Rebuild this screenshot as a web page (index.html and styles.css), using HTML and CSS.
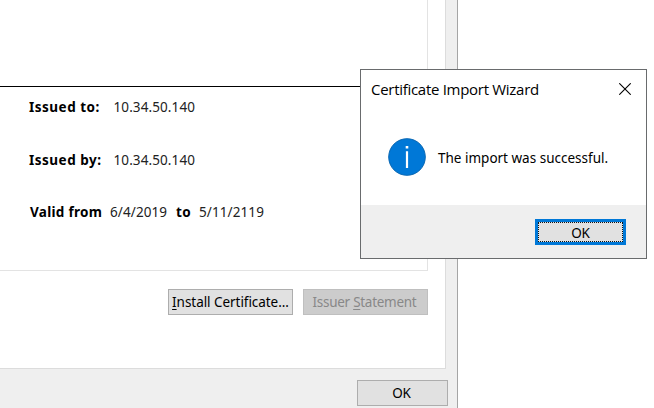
FILE: index.html
```
<!DOCTYPE html>
<html lang="en">
<head>
<meta charset="utf-8">
<title>Certificate Import Wizard</title>
<link rel="stylesheet" href="styles.css">
</head>
<body>
<main class="window">
  <section class="sheet">
    <div class="details">
      <div class="summary"></div>
      <div class="row"><b class="issued-to">Issued to:</b><span class="value">10.34.50.140</span></div>
      <div class="row"><b class="issued-by">Issued by:</b><span class="value">10.34.50.140</span></div>
      <div class="row validity"><b class="from">Valid from</b><span class="value start">6/4/2019</span><b class="to">to</b><span class="value">5/11/2119</span></div>
    </div>
    <div class="actions">
      <button class="button install"><span><u>I</u>nstall Certificate...</span></button>
      <button class="button issuer" disabled><span>Issuer <u>S</u>tatement</span></button>
    </div>
  </section>
  <footer class="window-footer"><button class="button close-window">OK</button></footer>
</main>
<section class="dialog" role="dialog">
  <header class="titlebar">
    <span class="title">Certificate Import Wizard</span>
    <svg class="close" width="12" height="12" viewBox="0 0 12 12"><path d="M.3.3 11.7 11.7M11.7.3.3 11.7" stroke="#000" stroke-width="1.1"/></svg>
  </header>
  <div class="message">
    <svg class="info" width="38" height="38" viewBox="0 0 38 38"><circle cx="19" cy="19" r="18.3" fill="#0078d7" stroke="#0967b3" stroke-width="1"/><path d="M17.7 8h2.6v2.4h-2.6zM17.9 13.2h2.2V30h-2.2z" fill="#fff"/></svg>
    <span class="message-text">The import was successful.</span>
  </div>
  <footer class="dialog-footer"><button class="button confirm">OK</button></footer>
</section>
</body>
</html>
```
FILE: styles.css
```
* { box-sizing: border-box; }
body {
  margin: 0;
  width: 654px;
  height: 408px;
  overflow: hidden;
  background: #fff;
  color: #000;
  font: 14px/18px "Noto Sans", sans-serif;
}
.window {
  width: 458px;
  height: 408px;
  background: #efefef;
  border-right: 1px solid #a5a5a5;
}
.sheet {
  width: 446px;
  height: 369px;
  background: #fff;
  border-right: 1px solid #dcdcdc;
  border-bottom: 1px solid #dcdcdc;
}
.details {
  width: 428px;
  height: 271px;
  border-right: 1px solid #e3e3e3;
  border-bottom: 1px solid #e3e3e3;
}
.summary { height: 87px; border-bottom: 1px solid #000; }
.row {
  display: flex;
  height: 18px;
  margin-top: 35px;
  padding-left: 29px;
  white-space: nowrap;
}
.summary + .row { margin-top: 11px; }
.row b { font-size: 13.5px; font-weight: 700; letter-spacing: .5px; }
.issued-to, .issued-by { width: 84.5px; }
.value { color: #222; font-size: 13.5px; letter-spacing: .1px; }
.row.validity { margin-top: 34px; padding-left: 30px; }
.row .from { width: 80px; letter-spacing: .3px; }
.start { width: 66px; }
.to { width: 23px; }
.actions {
  display: flex;
  justify-content: flex-end;
  gap: 10px;
  padding: 18px 17px 0 0;
}
.button {
  display: flex;
  align-items: center;
  justify-content: center;
  height: 26px;
  padding: 0;
  border: 1px solid #adadad;
  background: #e1e1e1;
  color: #000;
  font: 13.5px/18px "Noto Sans", sans-serif;
  letter-spacing: -.2px;
  white-space: nowrap;
}
.button u { text-underline-offset: 2px; text-decoration-thickness: 1px; }
.install { width: 125px; letter-spacing: -.05px; }
.issuer { width: 125px; padding-right: 2px; background: #ccc; border-color: #bfbfbf; color: #888; letter-spacing: -.28px; }
.window-footer { display: flex; justify-content: flex-end; padding: 11px 9px 0 0; }
.close-window { width: 91px; height: 26px; padding-right: 2px; }
.dialog {
  position: absolute;
  left: 360px;
  top: 69px;
  width: 287px;
  height: 190px;
  display: flex;
  flex-direction: column;
  background: #fff;
  border: 1px solid #696b6d;
}
.titlebar {
  display: flex;
  align-items: center;
  justify-content: space-between;
  height: 38px;
  padding: 0 15px 0 10px;
}
.title { font: 15px/20px "Open Sans", sans-serif; letter-spacing: -.29px; white-space: nowrap; }
.message {
  display: flex;
  align-items: center;
  flex: 1;
  gap: 12px;
  padding: 1px 0 0 27px;
}
.message-text { padding-top: 2px; font-size: 13.5px; white-space: nowrap; }
.dialog-footer {
  display: flex;
  justify-content: flex-end;
  height: 53px;
  padding: 14px 20px 0 0;
  background: #efefef;
}
.confirm {
  width: 91px;
  height: 26px;
  padding-top: 1px;
  border: 3px solid #0078d7;
  outline: 1px dotted #111;
  outline-offset: -4px;
}
```
